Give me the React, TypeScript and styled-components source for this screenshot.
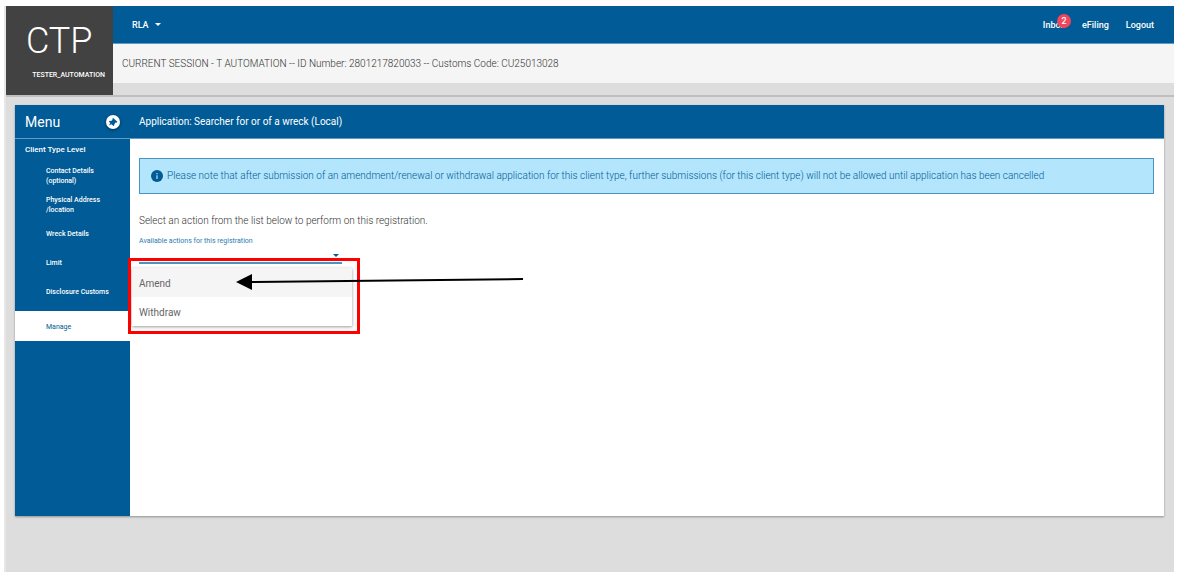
import React from 'react';
import styled, { createGlobalStyle } from 'styled-components';

const blue = '#005b96';

const Global = createGlobalStyle`
  *, *::before, *::after { box-sizing: border-box; }
  body {
    margin: 0;
    background: #fff;
    font-family: Roboto, "Liberation Sans", sans-serif;
    color: #333;
  }
  a { color: inherit; text-decoration: none; }
  button, select { font: inherit; color: inherit; border: 0; background: none; padding: 0; margin: 0; }
  h1, h2, p, ul { margin: 0; padding: 0; font-weight: 400; }
  ul { list-style: none; }
`;

const Page = styled.div`
  display: flex;
  flex-direction: column;
  min-height: 100vh;
  padding: 6px 6px 0 4px;
`;

const Shell = styled.div`
  flex: 1;
  display: flex;
  flex-direction: column;
  background: #ddd;
  border-left: 2px solid #e6e6e6;
`;

const TopArea = styled.header`
  display: flex;
  border-bottom: 2px solid #bfbfbf;
`;

const Brand = styled.div`
  width: 107px;
  height: 89px;
  background: #424242;
  color: #fff;
  display: flex;
  flex-direction: column;
  align-items: flex-end;
  padding: 14px 8px 0 20px;
  gap: 8px;
`;

const BrandName = styled.div`
  align-self: flex-start;
  font-size: 36px;
  line-height: 42px;
  font-weight: 300;
`;

const BrandUser = styled.div`
  font-size: 7px;
  line-height: 10px;
  font-weight: 500;
`;

const TopBars = styled.div`
  flex: 1;
  display: flex;
  flex-direction: column;
`;

const Nav = styled.nav`
  display: flex;
  align-items: center;
  justify-content: space-between;
  height: 38px;
  padding: 0 20px 0 19px;
  background: ${blue};
  border-bottom: 1px solid #5f9bc4;
  color: #fff;
  font-size: 9px;
  line-height: 12px;
  font-weight: 500;
`;

const NavMenu = styled.button`
  display: flex;
  align-items: center;
  gap: 6px;
`;

const NavLinks = styled.div`
  display: flex;
  gap: 17px;
`;

const NavLink = styled.a`
  position: relative;
`;

const Badge = styled.span`
  position: absolute;
  top: -5px;
  right: -6px;
  width: 14px;
  height: 14px;
  border-radius: 50%;
  background: #f0455a;
  line-height: 14px;
  text-align: center;
`;

const Session = styled.div`
  height: 39px;
  padding: 0 9px;
  background: #f5f5f5;
  font-size: 10px;
  line-height: 40px;
  font-weight: 300;
`;

const Card = styled.main`
  flex: 1;
  display: flex;
  margin: 8px 10px 56px 9px;
  background: #fff;
  box-shadow: 0 1px 2px rgba(0, 0, 0, 0.35);
`;

const Sidebar = styled.aside`
  width: 115px;
  background: ${blue};
  color: #fff;
`;

const SideHead = styled.div`
  display: flex;
  align-items: center;
  justify-content: space-between;
  height: 34px;
  padding: 0 10px;
  border-bottom: 1px solid #5f9bc4;
`;

const SideTitle = styled.h2`
  font-size: 14px;
  line-height: 18px;
`;

const PinButton = styled.button`
  display: flex;
  align-items: center;
  justify-content: center;
  width: 14px;
  height: 14px;
  border-radius: 50%;
  background: #fff;
  color: ${blue};
  box-shadow: 0 1px 3px rgba(0, 0, 0, 0.5);
`;

const SideGroup = styled.div`
  padding: 5px 10px;
  font-size: 8px;
  line-height: 12px;
  font-weight: 500;
`;

const SideItem = styled.a<{ $active?: boolean }>`
  display: flex;
  align-items: center;
  height: ${p => (p.$active ? 30 : 29)}px;
  margin-top: ${p => (p.$active ? 5 : 0)}px;
  padding: 1px 14px 0 31px;
  font-size: 7px;
  line-height: 10px;
  font-weight: ${p => (p.$active ? 400 : 500)};
  white-space: pre;
  background: ${p => (p.$active ? '#fff' : 'transparent')};
  color: ${p => (p.$active ? blue : '#fff')};
`;

const Main = styled.section`
  flex: 1;
  min-width: 0;
`;

const MainHead = styled.div`
  height: 34px;
  padding: 0 9px;
  background: ${blue};
  border-bottom: 1px solid #5f9bc4;
  color: #fff;
`;

const MainTitle = styled.h1`
  font-size: 10px;
  line-height: 34px;
`;

const Content = styled.div`
  padding: 19px 10px 0 9px;
`;

const Notice = styled.div`
  display: flex;
  align-items: center;
  gap: 4px;
  min-height: 36px;
  padding: 0 11px;
  border: 1px solid #4b93c2;
  background: #b3e5fc;
  color: ${blue};
  font-size: 10px;
  line-height: 14px;
  font-weight: 300;
`;

const Prompt = styled.p`
  margin-top: 20px;
  font-size: 10px;
  line-height: 14px;
  font-weight: 300;
`;

const Field = styled.div`
  position: relative;
  display: flex;
  flex-direction: column;
  width: 203px;
  margin-top: 8px;
`;

const FieldLabel = styled.label`
  color: #2c7cb0;
  font-size: 7px;
  line-height: 10px;
`;

const SelectRow = styled.div`
  display: grid;
  height: 18px;
  border-bottom: 2px solid #4b93c2;

  > * { grid-area: 1 / 1; }
`;

const Select = styled.select`
  appearance: none;
  width: 100%;
  outline: 0;
`;

const Caret = styled.svg`
  justify-self: end;
  align-self: center;
  margin-right: 3px;
  pointer-events: none;
`;

const Options = styled.ul`
  position: absolute;
  top: 32px;
  left: -7px;
  width: 220px;
  background: #fff;
  box-shadow: 0 1px 3px rgba(0, 0, 0, 0.4);
`;

const Option = styled.button<{ $hover?: boolean }>`
  display: block;
  width: 100%;
  height: 29px;
  padding: 1px 7px 0;
  background: ${p => (p.$hover ? '#f5f5f5' : '#fff')};
  color: #666;
  font-size: 10px;
  text-align: left;
`;

const Highlight = styled.div`
  position: absolute;
  top: 22px;
  left: -11px;
  width: 232px;
  height: 76px;
  border: 3px solid #f00;
  pointer-events: none;
`;

const Arrow = styled.svg`
  position: absolute;
  top: 36px;
  left: 97px;
  pointer-events: none;
`;

const items = [
  'Contact Details\n(optional)',
  'Physical Address\n/location',
  'Wreck Details',
  'Limit',
  'Disclosure Customs',
];

export default function App() {
  return (
    <Page>
      <Global />
      <Shell>
        <TopArea>
          <Brand>
            <BrandName>CTP</BrandName>
            <BrandUser>TESTER_AUTOMATION</BrandUser>
          </Brand>
          <TopBars>
            <Nav>
              <NavMenu type="button">
                RLA
                <svg width="6" height="3" viewBox="0 0 6 3" aria-hidden="true">
                  <path d="M0 0h6L3 3z" fill="currentColor" />
                </svg>
              </NavMenu>
              <NavLinks>
                <NavLink href="#inbox">Inbox<Badge>2</Badge></NavLink>
                <NavLink href="#efiling">eFiling</NavLink>
                <NavLink href="#logout">Logout</NavLink>
              </NavLinks>
            </Nav>
            <Session>
              CURRENT SESSION - T AUTOMATION -- ID Number: 2801217820033 -- Customs Code: CU25013028
            </Session>
          </TopBars>
        </TopArea>
        <Card>
          <Sidebar>
            <SideHead>
              <SideTitle>Menu</SideTitle>
              <PinButton type="button" aria-label="Pin menu">
                <svg width="10" height="10" viewBox="0 0 10 10" aria-hidden="true">
                  <path d="M5.200 1 9.400 4.800 8.500 5.700 7.600 5.600 6.400 7 6.300 8.300 5.300 9 3.600 7.200 1 8.200 2.300 5.900.800 4.600 1.700 3.700 3.200 3.900 4.600 2.600 4.300 1.700z" fill="currentColor" />
                </svg>
              </PinButton>
            </SideHead>
            <SideGroup>Client Type Level</SideGroup>
            <nav>
              {items.map(item => (
                <SideItem key={item} href="#section">{item}</SideItem>
              ))}
              <SideItem href="#manage" $active>Manage</SideItem>
            </nav>
          </Sidebar>
          <Main>
            <MainHead>
              <MainTitle>Application: Searcher for or of a wreck (Local)</MainTitle>
            </MainHead>
            <Content>
              <Notice>
                <svg width="12" height="12" viewBox="0 0 12 12" aria-hidden="true">
                  <circle cx="6" cy="6" r="6" fill={blue} />
                  <path d="M5.400 3h1.200v1.200H5.400zM5.400 5.200h1.200V9H5.400z" fill="#b3e5fc" />
                </svg>
                <span>
                  Please note that after submission of an amendment/renewal or withdrawal application for this client type, further submissions (for this client type) will not be allowed until application has been cancelled
                </span>
              </Notice>
              <Prompt>Select an action from the list below to perform on this registration.</Prompt>
              <Field>
                <FieldLabel htmlFor="action">Available actions for this registration</FieldLabel>
                <SelectRow>
                  <Select id="action" defaultValue="">
                    <option value="" />
                  </Select>
                  <Caret width="6" height="3" viewBox="0 0 6 3" aria-hidden="true">
                    <path d="M0 0h6L3 3z" fill={blue} />
                  </Caret>
                </SelectRow>
                <Options>
                  <li><Option type="button" $hover>Amend</Option></li>
                  <li><Option type="button">Withdraw</Option></li>
                </Options>
                <Highlight />
                <Arrow width="290" height="20" viewBox="0 0 290 20" aria-hidden="true">
                  <path d="M0 10 16 2v16z" fill="#000" />
                  <path d="M14 10 287 7" stroke="#000" strokeWidth="2" />
                </Arrow>
              </Field>
            </Content>
          </Main>
        </Card>
      </Shell>
    </Page>
  );
}
